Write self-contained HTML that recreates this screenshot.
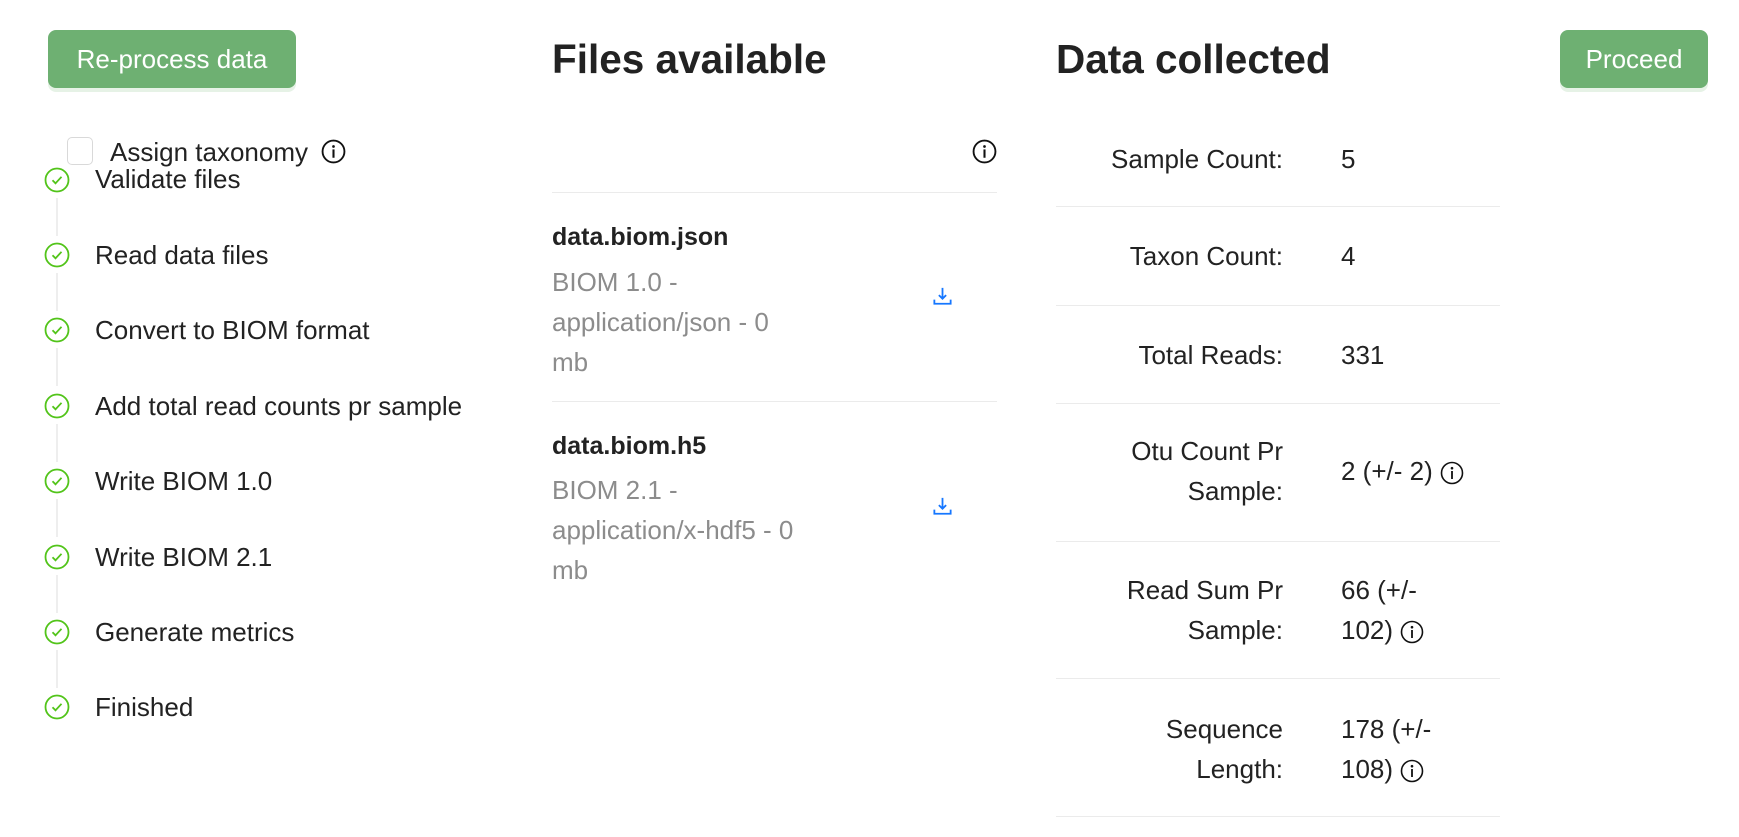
<!DOCTYPE html>
<html><head><meta charset="utf-8"><style>
*{margin:0;padding:0;box-sizing:border-box}
body{width:1739px;height:837px;background:#fff;font-family:"Liberation Sans",sans-serif;color:#222;position:relative;overflow:hidden;font-size:26px}
.a{position:absolute;white-space:nowrap}
.btn{position:absolute;background:#6eb072;color:#fff;border-radius:8px;height:58px;top:30px;display:flex;align-items:center;justify-content:center;font-size:26px;box-shadow:0 4px 0 #e6f2e6}
h2{position:absolute;font-size:40.5px;font-weight:bold;color:#222;top:36px}
.hr{position:absolute;height:1px;background:#ebebeb}
.gray{color:#8c8c8c}
.lbl{position:absolute;right:456px;text-align:right;line-height:40px;white-space:nowrap}
.val{position:absolute;left:1341px;line-height:40px;white-space:nowrap}
.info{display:inline-block;vertical-align:middle}
</style></head><body>
<div class="btn" style="left:48px;width:248px">Re-process data</div>
<div class="btn" style="left:1560px;width:148px">Proceed</div>
<h2 style="left:552px">Files available</h2>
<h2 style="left:1056px">Data collected</h2>

<div class="a" style="left:67px;top:137px;width:26px;height:28px;border:1px solid #d9d9d9;border-radius:5px;background:#fff"></div>
<div class="a" style="left:110px;top:137px;line-height:30px">Assign taxonomy</div>
<svg class="a" style="left:321px;top:139px" width="25" height="25" viewBox="0 0 24 24"><circle cx="12" cy="12" r="10.5" fill="none" stroke="#111" stroke-width="1.8"/><circle cx="12" cy="7.2" r="1.3" fill="#111"/><rect x="11" y="10" width="2" height="8" fill="#111"/></svg>

<div class="a" style="left:56px;top:198px;width:2px;height:38px;background:#eee"></div>
<div class="a" style="left:56px;top:273px;width:2px;height:38px;background:#eee"></div>
<div class="a" style="left:56px;top:348px;width:2px;height:38px;background:#eee"></div>
<div class="a" style="left:56px;top:424px;width:2px;height:38px;background:#eee"></div>
<div class="a" style="left:56px;top:499px;width:2px;height:38px;background:#eee"></div>
<div class="a" style="left:56px;top:575px;width:2px;height:38px;background:#eee"></div>
<div class="a" style="left:56px;top:650px;width:2px;height:38px;background:#eee"></div>

<svg class="a" style="left:44px;top:167px" width="26" height="26" viewBox="0 0 26 26"><circle cx="13" cy="13" r="11.5" fill="none" stroke="#52c41a" stroke-width="1.8"/><path d="M8.5 13.3l3 3 6-6.5" fill="none" stroke="#52c41a" stroke-width="1.8"/></svg>
<svg class="a" style="left:44px;top:242px" width="26" height="26" viewBox="0 0 26 26"><circle cx="13" cy="13" r="11.5" fill="none" stroke="#52c41a" stroke-width="1.8"/><path d="M8.5 13.3l3 3 6-6.5" fill="none" stroke="#52c41a" stroke-width="1.8"/></svg>
<svg class="a" style="left:44px;top:317px" width="26" height="26" viewBox="0 0 26 26"><circle cx="13" cy="13" r="11.5" fill="none" stroke="#52c41a" stroke-width="1.8"/><path d="M8.5 13.3l3 3 6-6.5" fill="none" stroke="#52c41a" stroke-width="1.8"/></svg>
<svg class="a" style="left:44px;top:393px" width="26" height="26" viewBox="0 0 26 26"><circle cx="13" cy="13" r="11.5" fill="none" stroke="#52c41a" stroke-width="1.8"/><path d="M8.5 13.3l3 3 6-6.5" fill="none" stroke="#52c41a" stroke-width="1.8"/></svg>
<svg class="a" style="left:44px;top:468px" width="26" height="26" viewBox="0 0 26 26"><circle cx="13" cy="13" r="11.5" fill="none" stroke="#52c41a" stroke-width="1.8"/><path d="M8.5 13.3l3 3 6-6.5" fill="none" stroke="#52c41a" stroke-width="1.8"/></svg>
<svg class="a" style="left:44px;top:544px" width="26" height="26" viewBox="0 0 26 26"><circle cx="13" cy="13" r="11.5" fill="none" stroke="#52c41a" stroke-width="1.8"/><path d="M8.5 13.3l3 3 6-6.5" fill="none" stroke="#52c41a" stroke-width="1.8"/></svg>
<svg class="a" style="left:44px;top:619px" width="26" height="26" viewBox="0 0 26 26"><circle cx="13" cy="13" r="11.5" fill="none" stroke="#52c41a" stroke-width="1.8"/><path d="M8.5 13.3l3 3 6-6.5" fill="none" stroke="#52c41a" stroke-width="1.8"/></svg>
<svg class="a" style="left:44px;top:694px" width="26" height="26" viewBox="0 0 26 26"><circle cx="13" cy="13" r="11.5" fill="none" stroke="#52c41a" stroke-width="1.8"/><path d="M8.5 13.3l3 3 6-6.5" fill="none" stroke="#52c41a" stroke-width="1.8"/></svg>

<div class="a" style="left:95px;top:164px;line-height:30px">Validate files</div>
<div class="a" style="left:95px;top:240px;line-height:30px">Read data files</div>
<div class="a" style="left:95px;top:315px;line-height:30px">Convert to BIOM format</div>
<div class="a" style="left:95px;top:391px;line-height:30px">Add total read counts pr sample</div>
<div class="a" style="left:95px;top:466px;line-height:30px">Write BIOM 1.0</div>
<div class="a" style="left:95px;top:542px;line-height:30px">Write BIOM 2.1</div>
<div class="a" style="left:95px;top:617px;line-height:30px">Generate metrics</div>
<div class="a" style="left:95px;top:692px;line-height:30px">Finished</div>

<svg class="a" style="left:972px;top:139px" width="25" height="25" viewBox="0 0 24 24"><circle cx="12" cy="12" r="10.5" fill="none" stroke="#111" stroke-width="1.8"/><circle cx="12" cy="7.2" r="1.3" fill="#111"/><rect x="11" y="10" width="2" height="8" fill="#111"/></svg>
<div class="hr" style="left:552px;width:445px;top:192px"></div>
<div class="a" style="left:552px;top:222px;font-weight:bold;font-size:25px;line-height:30px">data.biom.json</div>
<div class="a gray" style="left:552px;top:262px;line-height:40px">BIOM 1.0 -<br>application/json - 0<br>mb</div>
<svg class="a" style="left:933px;top:287px" width="19" height="19" viewBox="0 0 21 21"><path d="M10.5 1v12M6.5 9l4 4 4-4" fill="none" stroke="#1677ff" stroke-width="2"/><path d="M1.5 14v4.5h18V14" fill="none" stroke="#1677ff" stroke-width="2"/></svg>
<div class="hr" style="left:552px;width:445px;top:401px"></div>
<div class="a" style="left:552px;top:431px;font-weight:bold;font-size:25px;line-height:30px">data.biom.h5</div>
<div class="a gray" style="left:552px;top:470px;line-height:40px">BIOM 2.1 -<br>application/x-hdf5 - 0<br>mb</div>
<svg class="a" style="left:933px;top:497px" width="19" height="19" viewBox="0 0 21 21"><path d="M10.5 1v12M6.5 9l4 4 4-4" fill="none" stroke="#1677ff" stroke-width="2"/><path d="M1.5 14v4.5h18V14" fill="none" stroke="#1677ff" stroke-width="2"/></svg>

<div class="lbl" style="top:139px">Sample Count:</div><div class="val" style="top:139px">5</div>
<div class="hr" style="left:1056px;width:444px;top:206px"></div>
<div class="lbl" style="top:236px">Taxon Count:</div><div class="val" style="top:236px">4</div>
<div class="hr" style="left:1056px;width:444px;top:305px"></div>
<div class="lbl" style="top:335px">Total Reads:</div><div class="val" style="top:335px">331</div>
<div class="hr" style="left:1056px;width:444px;top:403px"></div>
<div class="lbl" style="top:431px">Otu Count Pr<br>Sample:</div>
<div class="val" style="top:451px">2 (+/- 2) <svg class="info" width="24" height="24" viewBox="0 0 24 24"><circle cx="12" cy="12" r="10.5" fill="none" stroke="#111" stroke-width="1.6"/><circle cx="12" cy="7.2" r="1.3" fill="#111"/><rect x="11.1" y="10" width="1.8" height="8" fill="#111"/></svg></div>
<div class="hr" style="left:1056px;width:444px;top:541px"></div>
<div class="lbl" style="top:570px">Read Sum Pr<br>Sample:</div>
<div class="val" style="top:570px">66 (+/-<br>102) <svg class="info" width="24" height="24" viewBox="0 0 24 24"><circle cx="12" cy="12" r="10.5" fill="none" stroke="#111" stroke-width="1.6"/><circle cx="12" cy="7.2" r="1.3" fill="#111"/><rect x="11.1" y="10" width="1.8" height="8" fill="#111"/></svg></div>
<div class="hr" style="left:1056px;width:444px;top:678px"></div>
<div class="lbl" style="top:709px">Sequence<br>Length:</div>
<div class="val" style="top:709px">178 (+/-<br>108) <svg class="info" width="24" height="24" viewBox="0 0 24 24"><circle cx="12" cy="12" r="10.5" fill="none" stroke="#111" stroke-width="1.6"/><circle cx="12" cy="7.2" r="1.3" fill="#111"/><rect x="11.1" y="10" width="1.8" height="8" fill="#111"/></svg></div>
<div class="hr" style="left:1056px;width:444px;top:816px"></div>
</body></html>
